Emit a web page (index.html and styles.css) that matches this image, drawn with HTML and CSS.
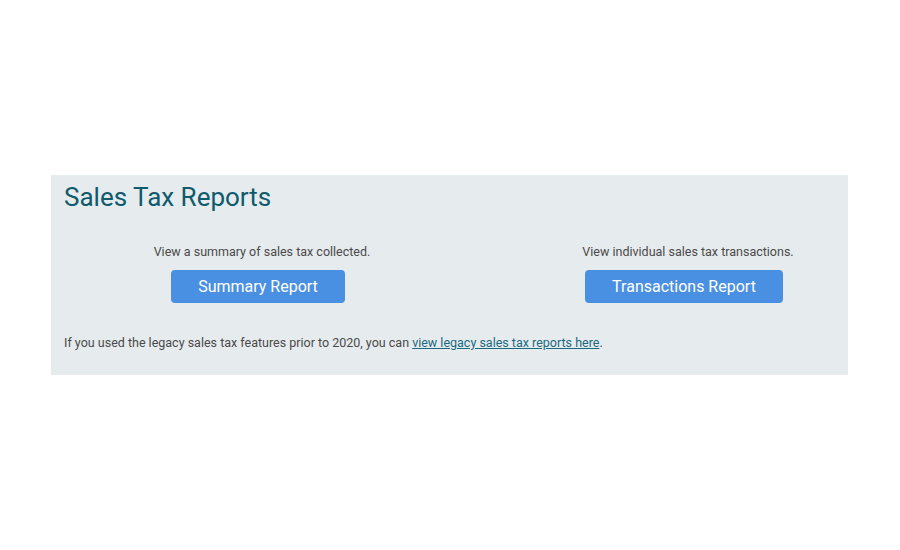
FILE: index.html
```html
<!DOCTYPE html>
<html lang="en">
<head>
    <meta charset="UTF-8">
    <meta name="viewport" content="width=device-width, initial-scale=1.0">
    <title>Sales Tax Reports</title>
    <link rel="stylesheet" href="styles.css">
</head>
<body>
    <div class="panel">
        <h2 class="panel-title">Sales Tax Reports</h2>
        <div class="reports">
            <div class="report">
                <p class="report-desc">View a summary of sales tax collected.</p>
                <button class="report-btn summary-btn">Summary Report</button>
            </div>
            <div class="report">
                <p class="report-desc">View individual sales tax transactions.</p>
                <button class="report-btn">Transactions Report</button>
            </div>
        </div>
        <p class="legacy">If you used the legacy sales tax features prior to 2020, you can <a href="#">view legacy sales tax reports here</a>.</p>
    </div>
</body>
</html>
```

FILE: styles.css
```css
/* Page */
body {
    margin: 0;
    padding: 175px 52px 0 51px;
    background-color: #fff;
    font-family: Roboto, 'Liberation Sans', sans-serif;
    color: #4a4a4a;
}

/* Grey box holding everything */
.panel {
    background-color: #e6ebee;
    height: 200px;
    box-sizing: border-box;
    padding: 6px 10px 0 13px;
}

.panel-title {
    margin: 0;
    font-size: 26px;
    font-weight: 400;
    line-height: 32px;
    color: #0f5a6c;
}

/* Two report columns */
.reports {
    display: grid;
    grid-template-columns: 396px 300px;
    justify-content: space-between;
    margin-top: 31px;
}

.report {
    display: flex;
    flex-direction: column;
    align-items: center;
}

.report-desc {
    margin: 0 0 10px;
    font-size: 12.5px;
    line-height: 16px;
}

.report-btn {
    height: 33px;
    padding: 0 27px;
    border: none;
    border-radius: 4px;
    background-color: #4a90e2;
    color: #fff;
    font-family: Roboto, 'Liberation Sans', sans-serif;
    font-size: 16px;
    margin-right: 8px;
}

.legacy {
    margin: 32px 0 0;
    font-size: 12.5px;
    line-height: 16px;
}

.legacy a {
    color: #1a6a80;
}
```
